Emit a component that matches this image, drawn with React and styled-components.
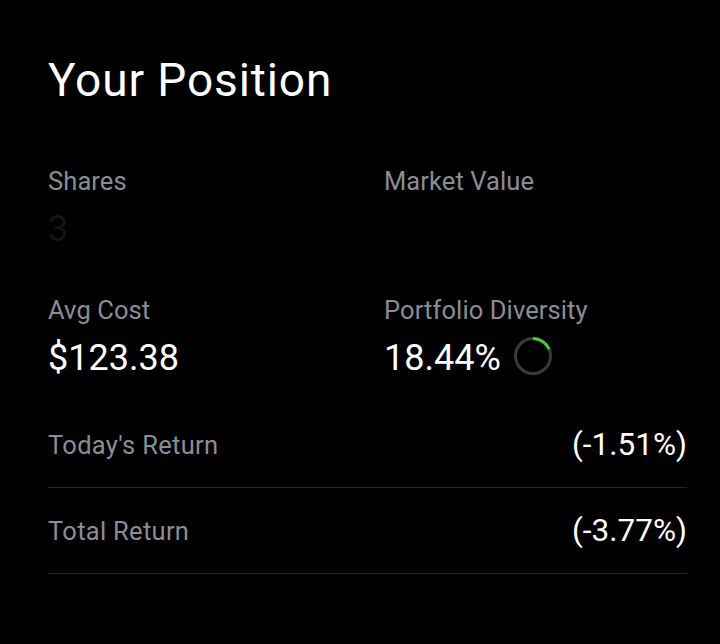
import React from "react";
import styled, { createGlobalStyle } from "styled-components";

const Global = createGlobalStyle`
  html, body { margin: 0; padding: 0; background: #000; }
  body { font-family: Roboto, "Noto Sans", sans-serif; -webkit-font-smoothing: antialiased; }
`;

const Page = styled.div`
  width: 720px;
  height: 644px;
  background: #000;
  box-sizing: border-box;
  padding: 52px 33px 0 48px;
`;

const Title = styled.h1`
  margin: 0;
  font-size: 46px;
  font-weight: 400;
  color: #fff;
  line-height: 56px;
  letter-spacing: 0.9px;
`;

const Grid = styled.div`
  display: grid;
  grid-template-columns: 336px 1fr;
  margin-top: 57px;
  row-gap: 44px;
`;

const Stat = styled.div`
  display: flex;
  flex-direction: column;
  gap: 11px;
`;

const Label = styled.div`
  font-size: 25.5px;
  line-height: 32px;
  color: #8a8e92;
  letter-spacing: 0.1px;
`;

const Value = styled.div`
  display: flex;
  align-items: center;
  gap: 12px;
  font-size: 36px;
  line-height: 42px;
  height: 42px;
  color: ${(p) => (p.$muted ? "#141414" : "#fff")};
`;

const Rows = styled.div`
  margin-top: 23px;
`;

const Row = styled.div`
  display: flex;
  justify-content: space-between;
  align-items: center;
  height: 86px;
  border-bottom: 1px solid #262626;
  box-sizing: border-box;
`;

const RowLabel = styled.div`
  font-size: 25.5px;
  color: #8a8e92;
  letter-spacing: 0.3px;
`;

const RowValue = styled.div`
  font-size: 31.5px;
  color: #fff;
`;

const RingSvg = styled.svg`
  margin-top: -4px;
`;

function Ring({ pct }) {
  const r = 17.5;
  const c = 2 * Math.PI * r;
  return (
    <RingSvg width="40" height="40" viewBox="0 0 40 40">
      <circle cx="20" cy="20" r={r} fill="none" stroke="#3a3a3a" strokeWidth="3" />
      <circle
        cx="20"
        cy="20"
        r={r}
        fill="none"
        stroke="#4cc53a"
        strokeWidth="3"
        strokeDasharray={`${(c * pct) / 100} ${c}`}
        transform="rotate(-90 20 20)"
      />
    </RingSvg>
  );
}

export default function App() {
  return (
    <Page>
      <Global />
      <Title>Your Position</Title>
      <Grid>
        <Stat>
          <Label>Shares</Label>
          <Value $muted>3</Value>
        </Stat>
        <Stat>
          <Label>Market Value</Label>
          <Value $muted></Value>
        </Stat>
        <Stat>
          <Label>Avg Cost</Label>
          <Value>$123.38</Value>
        </Stat>
        <Stat>
          <Label>Portfolio Diversity</Label>
          <Value>
            18.44%
            <Ring pct={18.44} />
          </Value>
        </Stat>
      </Grid>
      <Rows>
        <Row>
          <RowLabel>Today's Return</RowLabel>
          <RowValue>(-1.51%)</RowValue>
        </Row>
        <Row>
          <RowLabel>Total Return</RowLabel>
          <RowValue>(-3.77%)</RowValue>
        </Row>
      </Rows>
    </Page>
  );
}
